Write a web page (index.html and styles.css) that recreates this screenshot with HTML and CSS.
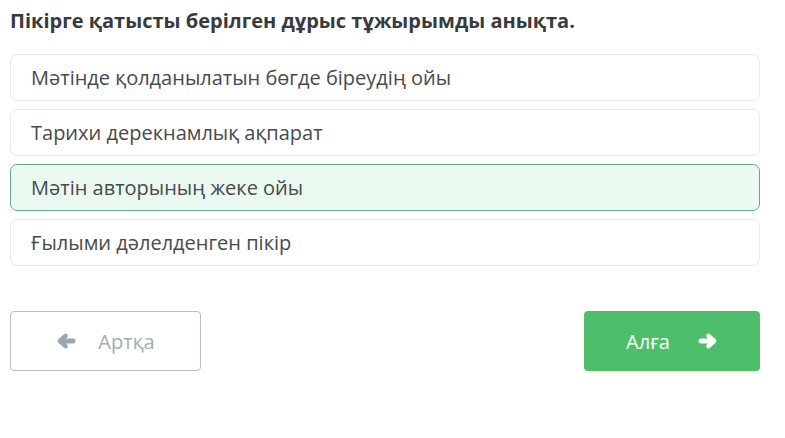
FILE: index.html
```html
<!DOCTYPE html>
<html>
<head>
<meta charset="utf-8">
<link rel="stylesheet" href="styles.css">
</head>
<body>
<div class="page">
  <h1 class="title">Пікірге қатысты берілген дұрыс тұжырымды анықта.</h1>
  <div class="options">
    <div class="option">Мәтінде қолданылатын бөгде біреудің ойы</div>
    <div class="option">Тарихи дерекнамлық ақпарат</div>
    <div class="option selected">Мәтін авторының жеке ойы</div>
    <div class="option">Ғылыми дәлелденген пікір</div>
  </div>
  <div class="nav">
    <button class="btn back">
      <svg class="arrow" viewBox="0 0 20 16" width="20" height="16"><g fill="none" stroke="currentColor" stroke-linecap="round" stroke-linejoin="round"><path d="M5 8H17" stroke-width="5"/><path d="M9.5 2.8L4 8L9.5 13.2" stroke-width="4.5"/></g></svg>
      <span>Артқа</span>
    </button>
    <button class="btn next">
      <span>Алға</span>
      <svg class="arrow" viewBox="0 0 20 16" width="20" height="16"><g fill="none" stroke="currentColor" stroke-linecap="round" stroke-linejoin="round"><path d="M3 8H15" stroke-width="5"/><path d="M10.5 2.8L16 8L10.5 13.2" stroke-width="4.5"/></g></svg>
    </button>
  </div>
</div>
</body>
</html>
```
FILE: styles.css
```css
html, body {
  margin: 0;
  background: #ffffff;
}
body {
  font-family: "Open Sans", "Noto Sans", sans-serif;
  color: #444;
}
.page {
  width: 750px;
  padding: 8px 0 0 10px;
}
.title {
  margin: 0;
  font-size: 20px;
  font-weight: 700;
  color: #383b3e;
  line-height: 26px;
  height: 26px;
}
.options {
  margin-top: 20px;
  display: flex;
  flex-direction: column;
  gap: 8px;
}
.option {
  height: 45px;
  border: 1px solid #e8eaea;
  border-radius: 7px;
  box-sizing: content-box;
  display: flex;
  align-items: center;
  padding-left: 20px;
  font-size: 20px;
  color: #484a4c;
  background: #fff;
}
.option.selected {
  background: #ebfaf1;
  border-color: #6aa593;
}
.nav {
  margin-top: 45px;
  display: flex;
  justify-content: space-between;
}
.btn {
  height: 60px;
  border-radius: 4px;
  display: flex;
  align-items: center;
  justify-content: center;
  gap: 22px;
  font-family: "Open Sans", "Noto Sans", sans-serif;
  font-size: 20px;
  cursor: pointer;
}
.btn.back {
  width: 191px;
  background: #fff;
  border: 1px solid #b7bfc4;
  color: #a3adb4;
}
.btn.back .arrow {
  color: #9aa7ae;
}
.btn.next {
  width: 176px;
  background: #4dbf6a;
  border: none;
  color: #fff;
  gap: 28px;
}
```
